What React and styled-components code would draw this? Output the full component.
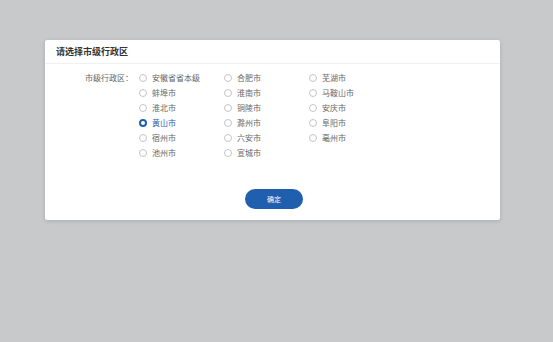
import React, { useState } from 'react';
import styled, { createGlobalStyle } from 'styled-components';

const GlobalStyle = createGlobalStyle`
  html, body {
    margin: 0;
    padding: 0;
    background: #c8c9cb;
    font-family: "Noto Sans CJK SC", "Noto Sans", sans-serif;
  }
`;

const cities = [
  '安徽省省本级', '合肥市', '芜湖市',
  '蚌埠市', '淮南市', '马鞍山市',
  '淮北市', '铜陵市', '安庆市',
  '黄山市', '滁州市', '阜阳市',
  '宿州市', '六安市', '亳州市',
  '池州市', '宣城市',
];

const App = () => {
  const [selected, setSelected] = useState('黄山市');

  return (
    <Page>
      <GlobalStyle />
      <Dialog>
        <Header>请选择市级行政区</Header>
        <Body>
          <FormRow>
            <Label>市级行政区：</Label>
            <Options>
              {cities.map((c) => (
                <Option key={c} $active={selected === c} onClick={() => setSelected(c)}>
                  <Circle $active={selected === c} />
                  {c}
                </Option>
              ))}
            </Options>
          </FormRow>
          <Footer>
            <Button>确定</Button>
          </Footer>
        </Body>
      </Dialog>
    </Page>
  );
};

const Page = styled.div`
  height: 342px;
  padding: 40px 0 0 45px;
  box-sizing: border-box;
`;

const Dialog = styled.div`
  width: 455px;
  height: 180px;
  background: #fff;
  border-radius: 2px;
  box-shadow: 0 1px 4px rgba(0, 0, 0, 0.15);
  display: flex;
  flex-direction: column;
`;

const Header = styled.div`
  height: 23px;
  line-height: 23px;
  padding-left: 11px;
  font-size: 9px;
  font-weight: 700;
  color: #333;
  border-bottom: 1px solid #f0f0f0;
`;

const Body = styled.div`
  flex: 1;
  padding-top: 6px;
  display: flex;
  flex-direction: column;
`;

const FormRow = styled.div`
  display: flex;
  align-items: flex-start;
`;

const Label = styled.div`
  width: 88px;
  text-align: right;
  font-size: 8px;
  line-height: 15px;
  color: #666;
  flex-shrink: 0;
`;

const Options = styled.div`
  margin-left: 6px;
  display: grid;
  grid-template-columns: repeat(3, 85px);
`;

const Option = styled.label`
  display: flex;
  align-items: center;
  gap: 5px;
  height: 15px;
  font-size: 8px;
  color: ${(p) => (p.$active ? '#1f5fae' : '#666')};
  cursor: pointer;
`;

const Circle = styled.span`
  width: 8px;
  height: 8px;
  box-sizing: border-box;
  border-radius: 50%;
  border: ${(p) => (p.$active ? '2.5px solid #1f5fae' : '1px solid #c5c5c5')};
  background: #fff;
  flex-shrink: 0;
`;

const Footer = styled.div`
  display: flex;
  justify-content: center;
  margin-top: 29px;
  padding-left: 3px;
`;

const Button = styled.button`
  width: 58px;
  height: 20px;
  border: none;
  border-radius: 10px;
  background: #1f5fae;
  color: #fff;
  font-family: inherit;
  font-size: 7px;
  cursor: pointer;
`;

export default App;
